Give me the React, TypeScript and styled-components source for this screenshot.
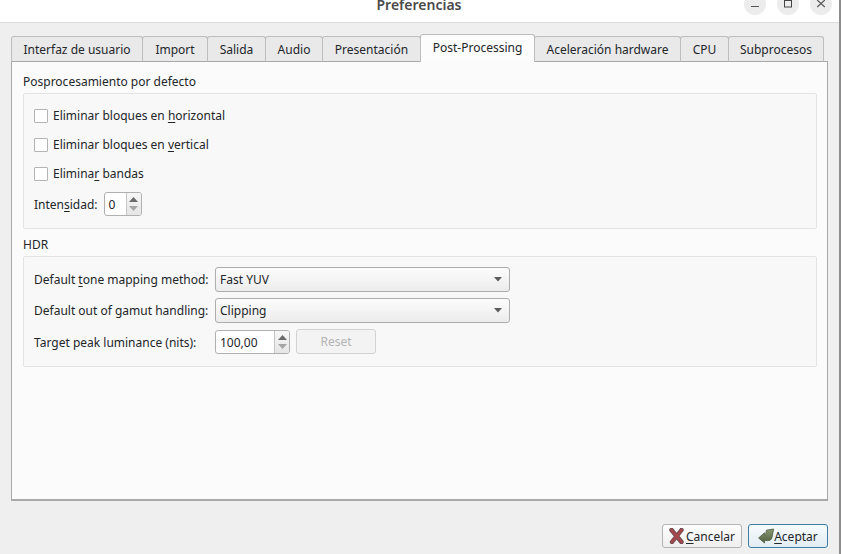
import { createGlobalStyle, styled } from "styled-components";

const GlobalStyle = createGlobalStyle`
  html, body {
    margin: 0;
    padding: 0;
    background: #efefef;
  }
  body {
    font-family: "Noto Sans", "Open Sans", sans-serif;
    font-size: 12px;
    color: #232629;
  }
`;

const Window = styled.div`
  width: 841px;
  height: 554px;
  overflow: hidden;
  display: flex;
  flex-direction: column;
  background: #efefef;
  border-right: 2px solid #8c8c8c;
  box-sizing: border-box;
`;

const TitleBar = styled.div`
  height: 23px;
  box-sizing: border-box;
  flex: none;
  background: #fff;
  border-bottom: 1px solid #dcdcdc;
  position: relative;
  overflow: hidden;
  display: flex;
  justify-content: flex-end;
  align-items: flex-start;
  gap: 11px;
  padding-right: 7px;
`;

const Title = styled.div`
  position: absolute;
  left: 0;
  right: 1px;
  top: -5px;
  text-align: center;
  font-weight: 600;
  font-size: 14px;
  line-height: 19px;
  color: #4a4a4a;
`;

const WinButton = styled.div`
  width: 22px;
  height: 22px;
  margin-top: -7px;
  border-radius: 50%;
  background: #ececec;
  display: flex;
  align-items: center;
  justify-content: center;
`;

const Body = styled.div`
  flex: 1;
  display: flex;
  flex-direction: column;
  padding: 11px 11px 0 11px;
`;

const TabBar = styled.div`
  display: flex;
  height: 28px;
  align-items: flex-end;
  margin-bottom: -1px;
  position: relative;
  z-index: 1;
`;

const Tab = styled.div<{ $active?: boolean; $w: number }>`
  box-sizing: border-box;
  width: ${(p) => p.$w}px;
  height: ${(p) => (p.$active ? 28 : 26)}px;
  display: flex;
  align-items: center;
  justify-content: center;
  background: ${(p) => (p.$active ? "#fcfcfc" : "#e9e9e9")};
  border: 1px solid #bdbdbd;
  border-bottom: ${(p) => (p.$active ? "none" : "1px solid #a8a8a8")};
  border-radius: 3px 3px 0 0;
  margin-right: -1px;
  padding-bottom: ${(p) => (p.$active ? 2 : 0)}px;
  position: relative;
  z-index: ${(p) => (p.$active ? 2 : 0)};
`;

const Panel = styled.div`
  box-sizing: border-box;
  height: 440px;
  flex: none;
  background: #fbfbfb;
  border: 1px solid #a8a8a8;
  border-bottom: 2px solid #a9a9a9;
  padding: 0 10px 0 11px;
`;

const SectionTitle = styled.div<{ $h: number }>`
  box-sizing: border-box;
  height: ${(p) => p.$h}px;
  padding-bottom: 3px;
  display: flex;
  align-items: flex-end;
  line-height: 16px;
`;

const GroupBox = styled.div<{ $h: number; $top: number; $gap?: number }>`
  box-sizing: border-box;
  height: ${(p) => p.$h}px;
  background: #f8f8f8;
  border: 1px solid #e3e3e3;
  border-radius: 2px;
  padding: ${(p) => p.$top}px 10px 0;
  display: flex;
  flex-direction: column;
  gap: ${(p) => p.$gap ?? 0}px;
`;

const CheckRow = styled.div`
  height: 29px;
  flex: none;
  display: flex;
  align-items: center;
  gap: 5px;
`;

const CheckBox = styled.div`
  box-sizing: border-box;
  width: 14px;
  height: 14px;
  background: #fff;
  border: 1px solid #b4b4b4;
  border-radius: 1px;
`;

const Mnemonic = styled.span`
  text-decoration: underline;
  text-underline-offset: 2px;
`;

const FieldRow = styled.div<{ $gap?: number; $top?: number }>`
  display: flex;
  align-items: center;
  gap: ${(p) => p.$gap ?? 0}px;
  margin-top: ${(p) => p.$top ?? 0}px;
`;

const Label = styled.div<{ $w?: number; $drop?: number }>`
  width: ${(p) => (p.$w ? `${p.$w}px` : "auto")};
  flex: none;
  white-space: nowrap;
  padding-top: ${(p) => p.$drop ?? 0}px;
`;

const SpinBox = styled.div<{ $w: number }>`
  box-sizing: border-box;
  width: ${(p) => p.$w}px;
  height: 24px;
  align-self: flex-end;
  display: flex;
  background: #fff;
  border: 1px solid #b0b0b0;
  border-radius: 3px;
  overflow: hidden;
`;

const SpinValue = styled.div`
  flex: 1;
  display: flex;
  align-items: center;
  padding-left: 4px;
`;

const SpinArrows = styled.div`
  width: 14px;
  flex: none;
  border-left: 1px solid #c4c4c4;
  background: linear-gradient(#f6f6f6, #e6e6e6);
  display: flex;
  flex-direction: column;
  align-items: center;
  justify-content: center;
  gap: 4px;
`;

const Arrow = styled.svg`
  display: block;
`;

const Combo = styled.div`
  box-sizing: border-box;
  width: 295px;
  height: 25px;
  display: flex;
  align-items: center;
  justify-content: space-between;
  padding: 0 7px 0 4px;
  background: linear-gradient(#fcfcfc, #ececec);
  border: 1px solid #adadad;
  border-radius: 3px;
`;

const DisabledButton = styled.div`
  box-sizing: border-box;
  width: 80px;
  height: 25px;
  margin-left: 6px;
  display: flex;
  align-items: center;
  justify-content: center;
  color: #b4b4b4;
  background: #f3f3f3;
  border: 1px solid #d2d2d2;
  border-radius: 3px;
`;

const Footer = styled.div`
  flex: 1;
  display: flex;
  justify-content: flex-end;
  align-items: flex-start;
  gap: 6px;
  padding: 23px 0 0;
`;

const DialogButton = styled.div<{ $primary?: boolean; $w: number }>`
  box-sizing: border-box;
  width: ${(p) => p.$w}px;
  height: 24px;
  display: flex;
  align-items: center;
  justify-content: center;
  gap: ${(p) => (p.$primary ? 0 : 2)}px;
  border-radius: 3px;
  border: 1px solid ${(p) => (p.$primary ? "#3d7ea6" : "#b4b4b4")};
  background: ${(p) =>
    p.$primary
      ? "linear-gradient(#f7fbfd, #e2edf3)"
      : "linear-gradient(#fdfdfd, #efefef)"};
`;

const tabs: [string, number][] = [
  ["Interfaz de usuario", 132],
  ["Import", 66],
  ["Salida", 59],
  ["Audio", 58],
  ["Presentación", 99],
  ["Post-Processing", 115],
  ["Aceleración hardware", 147],
  ["CPU", 49],
  ["Subprocesos", 96],
];

const UpDown = () => (
  <SpinArrows>
    <Arrow width="9" height="5" viewBox="0 0 9 5">
      <path d="M4.5 0 L9 5 H0 Z" fill="#6a6a6a" />
    </Arrow>
    <Arrow width="9" height="5" viewBox="0 0 9 5">
      <path d="M0 0 H9 L4.5 5 Z" fill="#a5a5a5" />
    </Arrow>
  </SpinArrows>
);

const ComboArrow = () => (
  <Arrow width="8" height="5" viewBox="0 0 8 5">
    <path d="M0 0 H8 L4 4.5 Z" fill="#5c5c5c" />
  </Arrow>
);

const App = () => {
  return (
    <Window>
      <GlobalStyle />
      <TitleBar>
        <Title>Preferencias</Title>
        <WinButton>
          <svg width="10" height="10" viewBox="0 0 10 10">
            <path d="M1 7.5 H9" stroke="#555" strokeWidth="1" />
          </svg>
        </WinButton>
        <WinButton>
          <svg width="10" height="10" viewBox="0 0 10 10">
            <rect x="1.5" y="1.5" width="7" height="6.5" fill="none" stroke="#444" />
          </svg>
        </WinButton>
        <WinButton>
          <svg width="10" height="10" viewBox="0 0 10 10">
            <path d="M1.2 1 L8.8 8 M8.8 1 L1.2 8" stroke="#555" strokeWidth="1.1" />
          </svg>
        </WinButton>
      </TitleBar>
      <Body>
        <TabBar>
          {tabs.map(([name, w]) => (
            <Tab key={name} $w={w} $active={name === "Post-Processing"}>
              {name}
            </Tab>
          ))}
        </TabBar>
        <Panel>
          <SectionTitle $h={31}>Posprocesamiento por defecto</SectionTitle>
          <GroupBox $h={136} $top={7}>
            <CheckRow>
              <CheckBox />
              <span>
                Eliminar bloques en <Mnemonic>h</Mnemonic>orizontal
              </span>
            </CheckRow>
            <CheckRow>
              <CheckBox />
              <span>
                Eliminar bloques en <Mnemonic>v</Mnemonic>ertical
              </span>
            </CheckRow>
            <CheckRow>
              <CheckBox />
              <span>
                Elimina<Mnemonic>r</Mnemonic> bandas
              </span>
            </CheckRow>
            <FieldRow $gap={6} $top={4}>
              <Label>
                Inten<Mnemonic>s</Mnemonic>idad:
              </Label>
              <SpinBox $w={38}>
                <SpinValue>0</SpinValue>
                <UpDown />
              </SpinBox>
            </FieldRow>
          </GroupBox>
          <SectionTitle $h={27}>HDR</SectionTitle>
          <GroupBox $h={111} $top={10} $gap={6}>
            <FieldRow>
              <Label $w={181}>
                Default <Mnemonic>t</Mnemonic>one mapping method:
              </Label>
              <Combo>
                Fast YUV
                <ComboArrow />
              </Combo>
            </FieldRow>
            <FieldRow>
              <Label $w={181}>Default out of gamut handling:</Label>
              <Combo>
                Clipping
                <ComboArrow />
              </Combo>
            </FieldRow>
            <FieldRow>
              <Label $w={181} $drop={1}>
                Target peak luminance (nits):
              </Label>
              <SpinBox $w={75}>
                <SpinValue>100,00</SpinValue>
                <UpDown />
              </SpinBox>
              <DisabledButton>Reset</DisabledButton>
            </FieldRow>
          </GroupBox>
        </Panel>
        <Footer>
          <DialogButton $w={80}>
            <svg width="15" height="16" viewBox="0 0 15 16">
              <path
                d="M2.5 2 L12.5 14 M12.5 2 L3 14"
                stroke="#5f4a4c"
                strokeWidth="4.4"
                strokeLinecap="round"
              />
              <path
                d="M2.5 2 L12.5 14 M12.5 2 L3 14"
                stroke="#a4484f"
                strokeWidth="3"
                strokeLinecap="round"
              />
            </svg>
            <span>
              <Mnemonic>C</Mnemonic>ancelar
            </span>
          </DialogButton>
          <DialogButton $primary $w={80}>
            <svg width="16" height="16" viewBox="0 0 16 16">
              <defs>
                <linearGradient id="okFill" x1="0" y1="0" x2="0" y2="1">
                  <stop offset="0" stopColor="#8a9a74" />
                  <stop offset="1" stopColor="#505f40" />
                </linearGradient>
              </defs>
              <path
                d="M0.6 10 L6.5 4.8 V7 H7.6 L8.4 2.2 L15.6 1 L14 9.5 Q13.4 12.6 10 12.6 H6.5 V15 Z"
                fill="url(#okFill)"
                stroke="#4c5a3e"
                strokeWidth="0.8"
                strokeLinejoin="round"
              />
            </svg>
            <span>
              <Mnemonic>A</Mnemonic>ceptar
            </span>
          </DialogButton>
        </Footer>
      </Body>
    </Window>
  );
};

export default App;
